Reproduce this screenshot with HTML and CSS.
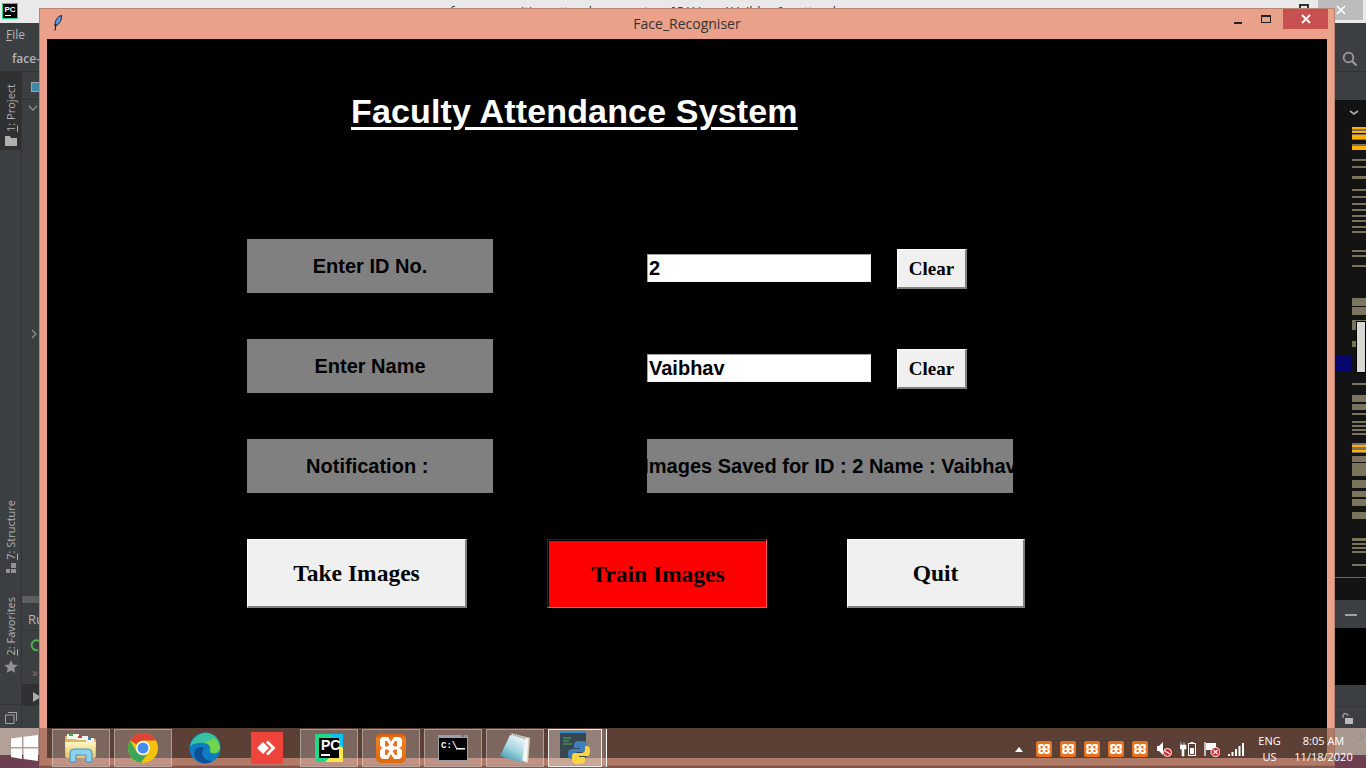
FILE: index.html
```html
<!DOCTYPE html>
<html lang="en">
<head>
<meta charset="utf-8">
<title>Face_Recogniser</title>
<link rel="stylesheet" href="styles.css">
</head>
<body>
<div class="desktop">
  <div class="ide">
    <div class="ide-title">
      <svg class="pc-logo" width="16" height="16" viewBox="0 0 16 16"><rect width="16" height="16" fill="#21d789"/><rect x="1" y="1" width="14" height="14" fill="#000"/><text x="2.500" y="9" class="pc-logo-text">PC</text><rect x="3" y="12" width="6" height="1" fill="#fff"/></svg>
      <span class="ide-caption">face-recognition-attendance-system [C:\Users\Vaibhav] – attendance.py</span>
      <span class="ide-restore"></span>
      <span class="ide-close"><svg width="10" height="10" viewBox="0 0 10 10"><path d="M1 1l8 8M9 1l-8 8" stroke="#fff" stroke-width="1.600"/></svg></span>
    </div>
    <div class="ide-menu"><span class="menu-item"><u>F</u>ile</span></div>
    <div class="ide-nav">
      <span class="crumb">face-recognition</span>
      <svg class="search" width="16" height="16" viewBox="0 0 16 16"><circle cx="6.500" cy="6.500" r="4.800" fill="none" stroke="#9a9c9e" stroke-width="1.800"/><path d="M10 10l4.500 4.500" stroke="#9a9c9e" stroke-width="2"/></svg>
    </div>
    <div class="ide-body">
      <div class="tool-strip">
        <div class="tool active">
          <span class="vtext"><u>1</u>: Project</span>
          <svg width="12" height="10" viewBox="0 0 12 10"><path d="M0 0h5l1 2h6v8H0z" fill="#aeb0b2"/></svg>
        </div>
        <div class="tool structure">
          <span class="vtext"><u>7</u>: Structure</span>
          <svg width="10" height="10" viewBox="0 0 10 10"><path d="M0 6h4v4H0zM5 6h5v4H5zM5 0h5v5H5z" fill="#909294"/></svg>
        </div>
        <div class="tool favorites">
          <span class="vtext"><u>2</u>: Favorites</span>
          <svg width="14" height="13" viewBox="0 0 14 13"><path d="M7 0l2 4.400 4.800.5-3.600 3.200 1 4.700L7 10.400 2.800 12.800l1-4.700L.2 4.900 5 4.400z" fill="#909294"/></svg>
        </div>
        <div class="tool-foot">
          <svg width="12" height="12" viewBox="0 0 12 12"><path d="M3 .5h8.500V9M.5 3h8.500v8.500H.5z" fill="none" stroke="#a0a2a4"/></svg>
        </div>
      </div>
      <div class="side-panel">
        <div class="panel-head"><span class="panel-square"></span></div>
        <svg class="chev" width="10" height="6" viewBox="0 0 10 6"><path d="M1 1l4 4 4-4" fill="none" stroke="#8b8d8f" stroke-width="1.400"/></svg>
        <svg class="chev-right" width="6" height="10" viewBox="0 0 6 10"><path d="M1 1l4 4-4 4" fill="none" stroke="#8b8d8f" stroke-width="1.400"/></svg>
        <div class="panel-scroll"></div>
        <div class="run-head">Run</div>
        <svg class="run-icon" width="12" height="12" viewBox="0 0 12 12"><path d="M10 2.500A5 5 0 1 0 8 11" fill="none" stroke="#4caf50" stroke-width="2"/></svg>
        <div class="run-more">»</div>
        <div class="run-play"><svg width="8" height="10" viewBox="0 0 8 10"><path d="M0 0l8 5-8 5z" fill="#a9abad"/></svg></div>
      </div>
      <div class="editor"></div>
      <div class="gutter">
        <div class="gutter-head"></div>
        <svg class="map" width="31" height="500" viewBox="0 0 31 500">
          <path d="M15 11l4 3 4-3" fill="none" stroke="#a8aaac" stroke-width="1.600"/>
          <g fill="#7b745d">
            <rect x="17" y="27" width="14" height="6"/><rect x="17" y="34" width="14" height="6"/><rect x="17" y="44" width="14" height="6"/>
            <rect x="17" y="59" width="14" height="2"/><rect x="17" y="66" width="14" height="2"/><rect x="17" y="76" width="14" height="3"/>
            <rect x="17" y="89" width="14" height="2"/><rect x="17" y="96" width="14" height="2"/><rect x="17" y="103" width="14" height="2"/>
            <rect x="17" y="109" width="14" height="2"/><rect x="17" y="115" width="14" height="2"/><rect x="17" y="120" width="14" height="2"/>
            <rect x="17" y="126" width="14" height="2"/><rect x="17" y="131" width="14" height="2"/><rect x="17" y="150" width="14" height="2"/>
            <rect x="17" y="155" width="14" height="2"/><rect x="17" y="165" width="14" height="2"/><rect x="17" y="198" width="14" height="8"/>
            <rect x="17" y="207" width="14" height="8"/><rect x="17" y="220" width="14" height="10"/><rect x="17" y="241" width="14" height="6"/>
            <rect x="17" y="283" width="14" height="2"/><rect x="17" y="295" width="14" height="7"/><rect x="17" y="304" width="14" height="6"/>
            <rect x="17" y="313" width="14" height="2"/><rect x="17" y="321" width="14" height="2"/><rect x="17" y="325" width="14" height="2"/>
            <rect x="17" y="329" width="14" height="2"/><rect x="17" y="333" width="14" height="2"/><rect x="17" y="343" width="14" height="10"/>
            <rect x="17" y="356" width="14" height="6"/><rect x="17" y="363" width="14" height="13"/><rect x="17" y="380" width="14" height="8"/>
            <rect x="17" y="391" width="14" height="6"/><rect x="17" y="399" width="14" height="7"/><rect x="17" y="412" width="14" height="7"/>
            <rect x="17" y="438" width="14" height="3"/><rect x="17" y="443" width="14" height="2"/><rect x="17" y="447" width="14" height="2"/>
            <rect x="17" y="451" width="14" height="2"/><rect x="17" y="464" width="14" height="2"/>
          </g>
          <g fill="#ffb000">
            <rect x="17" y="27" width="14" height="2"/><rect x="17" y="31" width="14" height="2"/><rect x="17" y="35" width="14" height="4"/>
            <rect x="17" y="46" width="14" height="4"/><rect x="17" y="345" width="14" height="2"/><rect x="17" y="350" width="14" height="2"/>
          </g>
          <rect x="0" y="255" width="17" height="17" fill="#06066e"/>
          <rect x="21.500" y="221.500" width="9" height="51" fill="#d9d9d4" stroke="#000"/>
          <rect x="0" y="477" width="31" height="1" fill="#666"/>
        </svg>
        <div class="gutter-tool"><span class="dash"></span></div>
        <div class="gutter-gap"></div>
        <div class="gutter-rule"></div>
        <div class="gutter-foot">
          <svg width="11" height="12" viewBox="0 0 11 12"><path d="M1 5V3a2.500 2.500 0 0 1 5 0" fill="none" stroke="#9a9c9e" stroke-width="1.300"/><rect x="3" y="5" width="8" height="6" fill="#b7b9bb"/></svg>
        </div>
      </div>
    </div>
  </div>

  <div class="tkwin">
    <div class="tk-title">
      <svg class="feather" width="10" height="16" viewBox="0 0 10 16"><path d="M8.500.5C4.500 1.500 2 5 1.800 10.500L3.500 10.500C6.500 9 9 5 8.500.5z" fill="#5b93e6" stroke="#15181e" stroke-width=".9"/><path d="M3 9L2 15.500" stroke="#15181e" stroke-width="1.100"/></svg>
      <span class="tk-caption">Face_Recogniser</span>
      <div class="tk-controls">
        <span class="tk-min"></span>
        <span class="tk-max"></span>
        <span class="tk-close"><svg width="10" height="10" viewBox="0 0 10 10"><path d="M1 1l8 8M9 1l-8 8" stroke="#fff" stroke-width="1.800"/></svg></span>
      </div>
    </div>
    <div class="tk-canvas">
      <h1 class="app-title">Faculty Attendance System</h1>
      <div class="form-row row-id">
        <div class="field-label">Enter ID No.</div>
        <div class="entry">2</div>
        <div class="btn btn-clear">Clear</div>
      </div>
      <div class="form-row">
        <div class="field-label">Enter Name</div>
        <div class="entry">Vaibhav</div>
        <div class="btn btn-clear">Clear</div>
      </div>
      <div class="form-row">
        <div class="field-label field-note">Notification : </div>
        <div class="message"><span>Images Saved for ID : 2 Name : Vaibhav</span></div>
      </div>
      <div class="action-row">
        <div class="btn btn-big btn-take">Take Images</div>
        <div class="btn btn-big btn-train">Train Images</div>
        <div class="btn btn-big btn-quit">Quit</div>
      </div>
    </div>
  </div>

  <div class="taskbar">
    <div class="start">
      <svg width="27" height="26" viewBox="0 0 27 26"><path d="M0 3.500L11 2v10H0zM12.500 1.800L27 0v12H12.500zM0 13.500h11v10.500L0 22zM12.500 13.500H27V26L12.500 24z" fill="#fff"/></svg>
    </div>
    <div class="task-apps">
      <div class="task on"><svg width="34" height="30" viewBox="0 0 34 30"><defs><linearGradient id="fold" x1="0" y1="0" x2="0" y2="1"><stop offset="0" stop-color="#fff6c4"/><stop offset="1" stop-color="#e6c562"/></linearGradient></defs><path d="M1 3h11l2 3h18v18H1z" fill="#d9b95c"/><rect x="3" y="1" width="12" height="5" fill="#f4f4ee"/><rect x="5" y="1" width="4" height="2" fill="#35b34a"/><rect x="12" y="3" width="12" height="4" fill="#f4f4ee"/><rect x="14" y="3" width="4" height="2" fill="#d6403a"/><rect x="22" y="5" width="8" height="4" fill="#f4f4ee"/><rect x="24" y="5" width="3" height="2" fill="#2b90d9"/><path d="M1 9h31l-1 16H2z" fill="url(#fold)"/><path d="M6 29v-9q0-4 4-4h14q4 0 4 4v9h-6v-7h-10v7z" fill="#8fd0ec" stroke="#3f93c4"/></svg></div>
      <div class="task on"><svg width="30" height="30" viewBox="0 0 30 30"><circle cx="15" cy="15" r="15" fill="#f4c20d"/><path d="M2 7.500A15 15 0 0 1 28 7.500H15A7.500 7.500 0 0 0 8.500 11.200z" fill="#db4437"/><path d="M2 7.500A15 15 0 0 0 12.800 29.800L19.500 21A7.500 7.500 0 0 1 8.500 18.700z" fill="#3aa757"/><circle cx="15" cy="15" r="7" fill="#fff"/><circle cx="15" cy="15" r="5.500" fill="#4a8bf0"/></svg></div>
      <div class="task"><svg width="32" height="32" viewBox="0 0 32 32"><circle cx="16" cy="16" r="15.500" fill="#0f7cc4"/><path d="M1 15C3 5 12 0 19 1c7 1 12 7 12 14 0 5-6 7-10 5 2-4 0-9-6-9-6 0-12 0-14 4z" fill="#36c2a0"/><path d="M25 6c5 4 6 9 6 10 0 5-6 7-10 4 1-5-1-9-6-9z" fill="#6fd44e"/><path d="M13 20c0 5 4 9 10 9-3 2-6 3-10 2-6-2-9-7-7-13 2-3 7-4 9-2z" fill="#0c4f96"/></svg></div>
      <div class="task"><svg width="32" height="32" viewBox="0 0 32 32"><rect width="32" height="32" fill="#ef443b"/><path d="M6 16l6-6 6 6-6 6z" fill="#fff"/><path d="M17 8.500l7.500 7.500-7.500 7.500-2-2 5.500-5.500-5.500-5.500z" fill="#fff"/></svg></div>
      <div class="task on"><svg width="28" height="28" viewBox="0 0 28 28"><rect width="28" height="28" fill="#21d789"/><path d="M10 28L28 10v18z" fill="#fce84d"/><path d="M14 0h14v14z" fill="#07c3f2"/><rect x="4" y="4" width="20" height="20" fill="#000"/><text x="6" y="16" class="pc-big">PC</text><rect x="6" y="20" width="9" height="2" fill="#fff"/></svg></div>
      <div class="task on"><svg width="32" height="32" viewBox="0 0 32 32"><defs><linearGradient id="xam" x1="0" y1="0" x2="0" y2="1"><stop offset="0" stop-color="#c4560f"/><stop offset=".2" stop-color="#f07d1e"/><stop offset="1" stop-color="#de6a12"/></linearGradient></defs><rect x="1" y="1" width="30" height="30" rx="5" fill="url(#xam)"/><path d="M9 5h4l3 5 3-5h4a4 4 0 0 1 4 4v4a4 4 0 0 1-3 3 4 4 0 0 1 3 3v4a4 4 0 0 1-4 4h-4l-3-5-3 5H9a4 4 0 0 1-4-4v-4a4 4 0 0 1 3-3 4 4 0 0 1-3-3V9a4 4 0 0 1 4-4z" fill="#fff"/><path d="M10 9h2l2.500 4-2 1.500H10zM20 9h2v5.500h-2.500l-2-1.500zM10 17.500h2.500l2 1.500-2.500 4h-2zM19.500 17.500H22V23h-2l-2.500-4z" fill="#e8731c"/></svg></div>
      <div class="task on"><svg width="30" height="26" viewBox="0 0 30 26"><rect width="30" height="26" fill="#9ca0a6"/><rect x="1" y="3" width="28" height="22" fill="#000"/><path d="M23 1h1M25 1h1M27 1h1" stroke="#333"/><text x="3" y="13" class="cmd-text">C:\</text><rect x="18" y="13" width="9" height="1.500" fill="#fff"/></svg></div>
      <div class="task on"><svg width="30" height="30" viewBox="0 0 30 30"><defs><linearGradient id="pad" x1=".7" y1="0" x2=".2" y2="1"><stop offset="0" stop-color="#eef8fa"/><stop offset=".5" stop-color="#9fd3de"/><stop offset="1" stop-color="#2f8ea5"/></linearGradient></defs><path d="M11 0l19 5-2 25-9-3z" fill="#d9d2b8"/><path d="M11 1l17 5-1 23-8-3z" fill="#f5f5f5"/><path d="M10 2l15 5-3 23L0 23z" fill="url(#pad)"/><path d="M11 1l15 5" stroke="#8a9599" stroke-width="2" stroke-dasharray="1 1"/></svg></div>
      <div class="task on active"><svg width="30" height="34" viewBox="0 0 30 34"><rect x="0" y="0" width="26" height="27" fill="#37474f"/><rect x="0" y="0" width="26" height="2" fill="#2d8bd8"/><path d="M3 7h8M3 10h6M3 13h9" stroke="#4caf50" stroke-width="1.200"/><path d="M19 10c-4 0-5 2-5 4v3h6v1h-8c-3 0-4 2-4 5s1 5 4 5h2v-4c0-2 2-3 4-3h6c2 0 3-1 3-3v-4c0-2-2-4-4-4z" fill="#3f80b8"/><path d="M20 33c4 0 5-2 5-4v-3h-6v-1h8c2 0 3-2 3-5s-1-5-3-5h-2v4c0 2-2 3-4 3h-6c-2 0-3 1-3 3v4c0 2 2 4 4 4z" fill="#ffd343"/></svg></div>
      <div class="task-edge"></div>
    </div>
    <div class="tray">
      <svg class="tray-up" width="8" height="5" viewBox="0 0 8 5"><path d="M0 5l4-5 4 5z" fill="#fff"/></svg>
      <div class="tray-icons">
        <svg width="16" height="16" viewBox="0 0 16 16"><use href="#xp"/></svg>
        <svg width="16" height="16" viewBox="0 0 16 16"><use href="#xp"/></svg>
        <svg width="16" height="16" viewBox="0 0 16 16"><use href="#xp"/></svg>
        <svg width="16" height="16" viewBox="0 0 16 16"><use href="#xp"/></svg>
        <svg width="16" height="16" viewBox="0 0 16 16"><use href="#xp"/></svg>
        <svg width="16" height="16" viewBox="0 0 16 16"><path d="M1 5h2l4-4v13l-4-4H1z" fill="#fff"/><circle cx="11.500" cy="11.500" r="4" fill="#d8232a" stroke="#fff"/><path d="M9 10l5 3" stroke="#fff" stroke-width="1.300"/></svg>
        <svg width="16" height="16" viewBox="0 0 16 16"><path d="M1 1v3M4 1v3M0 4h6v4H4v7H2V8H0z" fill="#fff" stroke="#fff" stroke-width=".6"/><rect x="8.500" y="2.500" width="7" height="12" fill="none" stroke="#fff"/><rect x="10" y="7" width="4" height="6" fill="#fff"/><rect x="10.500" y="1" width="3" height="1.500" fill="#fff"/></svg>
        <svg width="16" height="16" viewBox="0 0 16 16"><path d="M1 1v14" stroke="#fff" stroke-width="1.300"/><path d="M2 2h10v7H2z" fill="#fff"/><circle cx="11.500" cy="11" r="4.500" fill="#d8232a" stroke="#fff"/><path d="M9.500 9l4 4M13.500 9l-4 4" stroke="#fff" stroke-width="1.200"/></svg>
        <svg width="16" height="16" viewBox="0 0 16 16"><path d="M0 13h2v2H0zM3.500 11h2v4h-2zM7 8h2v7H7zM10.500 5h2v10h-2zM14 2h2v13h-2z" fill="#fff"/></svg>
      </div>
      <div class="tray-lang"><span>ENG</span><span>US</span></div>
      <div class="tray-clock"><span>8:05 AM</span><span>11/18/2020</span></div>
      <svg class="tray-more" width="6" height="10" viewBox="0 0 6 10"><path d="M1 1l4 4-4 4" fill="none" stroke="#8f8f8f" stroke-width="1.500"/></svg>
    </div>
  </div>
  <svg class="defs" width="0" height="0"><defs><g id="xp"><rect width="16" height="16" rx="2" fill="#e8731c"/><path d="M4 3h3l1 2 1-2h3a2 2 0 0 1 2 2v1a2 2 0 0 1-2 2 2 2 0 0 1 2 2v1a2 2 0 0 1-2 2H9l-1-2-1 2H4a2 2 0 0 1-2-2v-1a2 2 0 0 1 2-2 2 2 0 0 1-2-2V5a2 2 0 0 1 2-2z" fill="#fff"/><path d="M4.500 5h2l.5 2-1 .5H4.500zM9.500 5h2v2.500h-1.500l-1-.5zM4.500 9h1.500l1 .5-.5 1.500h-2zM10 9h1.500v2h-2l-.5-1.500z" fill="#e8731c"/></g></defs></svg>
</div>
</body>
</html>
```

FILE: styles.css
```css
* { box-sizing: border-box; }
html, body { margin: 0; padding: 0; background: #6b3c4c; }
.desktop { position: relative; width: 1366px; height: 768px; overflow: hidden; }
.defs { position: absolute; }

/* IDE behind */
.ide { position: absolute; left: 0; top: 0; width: 1366px; height: 760px; display: flex; flex-direction: column; background: #3c3f41; font-family: "Open Sans", "Noto Sans", sans-serif; font-size: 12px; color: #b4b6b8; }
.ide-title { height: 23px; background: #e9e9e9; display: flex; align-items: flex-start; padding: 3px 3px 0 2px; position: relative; }
.pc-logo-text { font: bold 8px "Liberation Sans", sans-serif; fill: #fff; }
.ide-caption { margin-left: 432px; font-size: 13px; line-height: 16px; height: 9px; overflow: hidden; color: #333; white-space: nowrap; }
.ide-restore { width: 10px; height: 8px; margin-left: auto; margin-top: 1px; margin-right: 9px; border: 2px solid #333; border-bottom: 0; }
.ide-close { width: 45px; height: 20px; margin-top: -3px; background: #bcbcbc; display: flex; align-items: center; justify-content: center; }
.ide-menu { height: 23px; padding: 3px 6px; }
.menu-item { color: #b4b6b8; }
.ide-nav { height: 26px; border-bottom: 1px solid #323232; display: flex; align-items: center; justify-content: space-between; padding: 0 8px 0 12px; font-weight: 600; }
.ide-body { flex: 1; display: flex; min-height: 0; }
.tool-strip { width: 22px; border-right: 1px solid #323436; display: flex; flex-direction: column; align-items: center; }
.tool { display: flex; flex-direction: column; align-items: center; gap: 4px; width: 100%; }
.tool.active { background: #2f3133; height: 78px; padding-top: 12px; }
.vtext { writing-mode: vertical-rl; transform: rotate(180deg); font-family: "Open Sans", sans-serif; font-size: 11px; color: #b0b2b4; line-height: 14px; }
.tool.structure { margin-top: auto; }
.tool.favorites { margin-top: 24px; }
.tool-foot { margin-top: 31px; width: 100%; border-top: 1px solid #323436; padding: 6px 0 0 5px; height: 56px; flex: none; }
.side-panel { width: 17px; display: flex; flex-direction: column; overflow: hidden; }
.panel-head { height: 28px; border-bottom: 1px solid #323436; padding: 10px 0 0 9px; }
.panel-square { display: block; width: 12px; height: 10px; background: #3f88a8; border: 1px solid #a0a2a4; }
.chev { margin: 5px 0 0 6px; }
.chev-right { margin: 218px 0 0 9px; }
.panel-scroll { margin-top: 257px; height: 7px; background: #5c5e60; }
.run-head { margin-top: 7px; height: 21px; padding-left: 6px; border-bottom: 1px solid #323436; white-space: nowrap; color: #b4b6b8; font-size: 13px; }
.run-icon { margin: 8px 0 0 8px; }
.run-more { margin: 16px 0 0 10px; line-height: 12px; color: #777; }
.run-play { margin-top: 5px; height: 22px; background: #2f3133; padding: 5px 0 0 11px; }
.editor { flex: 1; background: #2b2b2b; }
.gutter { width: 31px; background: #131313; display: flex; flex-direction: column; }
.gutter-head { height: 28px; flex: none; background: #3c3f41; }
.map { display: block; flex: none; }
.gutter-tool { height: 28px; flex: none; background: #3c3f41; display: flex; align-items: center; justify-content: center; }
.dash { width: 12px; height: 2px; background: #a0a2a4; margin-top: 1px; }
.gutter-gap { height: 57px; flex: none; background: #000; }
.gutter-rule { height: 22px; flex: none; background: #3c3f41; border-bottom: 1px solid #323436; }
.gutter-foot { flex: 1; background: #3c3f41; padding: 5px 0 0 7px; }

/* Tk window */
.tkwin { position: absolute; left: 39px; top: 8px; width: 1296px; height: 758px; background: #e9a189; border: 1px solid #b98472; padding: 0 7px 7px; display: flex; flex-direction: column; }
.tk-title { height: 30px; flex: none; display: flex; align-items: flex-start; position: relative; justify-content: center; }
.feather { position: absolute; left: 6px; top: 6px; }
.tk-caption { font-family: "Open Sans", "Noto Sans", sans-serif; font-size: 14px; color: #333; margin-top: 5px; }
.tk-controls { position: absolute; right: -1px; top: 0; display: flex; align-items: flex-start; }
.tk-min { width: 8px; height: 2px; background: #222; margin: 13px 19px 0 0; }
.tk-max { width: 10px; height: 8px; background: transparent; border: 1px solid #222; border-top-width: 2px; margin: 6px 12px 0 0; }
.tk-close { width: 45px; height: 20px; background: #c75050; display: flex; align-items: center; justify-content: center; }
.tk-canvas { flex: 1; background: #000; padding-left: 200px; display: flex; flex-direction: column; }
.app-title { margin: 50px 0 0 104px; width: max-content; font: bold 34px/44px "Liberation Sans", Arial, sans-serif; letter-spacing: .16px; color: #fff; text-decoration: underline; text-decoration-thickness: 3px; text-underline-offset: 4px; }
.form-row { display: flex; align-items: flex-start; height: 54px; margin-top: 46px; }
.row-id { margin-top: 106px; }
.field-label { width: 246px; height: 54px; flex: none; background: #808080; display: flex; align-items: center; justify-content: center; white-space: pre; font: bold 20px "Liberation Sans", Arial, sans-serif; color: #000; }
.entry { width: 224px; height: 28px; margin: 15px 0 0 154px; flex: none; background: #fff; border: 1px solid #f0f0f0; border-top-color: #a0a0a0; border-left-color: #a0a0a0; padding-left: 1px; font: bold 20px/26px "Liberation Sans", Arial, sans-serif; color: #000; }
.btn { display: flex; align-items: center; justify-content: center; flex: none; background: #f0f0f0; border: 2px solid #808080; border-top: 1px solid #fff; border-left: 1px solid #fff; font-family: "Liberation Serif", "Times New Roman", serif; font-weight: bold; color: #000; }
.btn-clear { width: 70px; height: 40px; margin: 10px 0 0 26px; font-size: 19px; }
.message { width: 366px; height: 54px; margin-left: 154px; background: #808080; display: flex; align-items: center; justify-content: center; overflow: hidden; white-space: nowrap; font: bold 20px "Liberation Sans", Arial, sans-serif; color: #000; }
.message span { flex: none; }
.action-row { display: flex; margin-top: 46px; }
.btn-big { height: 69px; font-size: 23.5px; }
.btn-take { width: 220px; }
.btn-train { width: 220px; margin-left: 80px; padding: 2px 0 0 2px; background: #f00; border: 1px solid #ff5555; border-top-color: #7a0000; border-left-color: #7a0000; box-shadow: inset 1px 1px 0 #000; }
.btn-quit { width: 178px; margin-left: 80px; }

/* Taskbar */
.taskbar { position: absolute; left: 0; right: 0; bottom: 0; height: 40px; background: linear-gradient(#b3a198 27px, #6d3f50 27px) left / 39px 100% no-repeat, linear-gradient(#a9988f 27px, #6d3f50 27px) right / 31px 100% no-repeat, rgba(144, 100, 83, .64); display: flex; align-items: stretch; font-family: "Open Sans", "Noto Sans", sans-serif; font-size: 11px; color: #fff; }
.start { width: 52px; padding: 7px 0 0 11px; flex: none; }
.task-apps { display: flex; gap: 4px; }
.task { width: 58px; height: 38px; margin-top: 1px; display: flex; align-items: center; justify-content: center; border: 1px solid transparent; }
.task.on { background: rgba(255, 255, 255, .2); border-color: rgba(255, 255, 255, .35); }
.task.active { width: 54px; background: rgba(255, 255, 255, .34); border-color: rgba(255, 255, 255, .85); overflow: hidden; }
.task-edge { width: 5px; height: 38px; margin: 1px 0 0 -4px; background: rgba(255, 255, 255, .2); border-right: 1px solid #fff; }
.tray { margin-left: auto; display: flex; align-items: flex-start; }
.tray-up { margin: 19px 13px 0 0; }
.tray-icons { display: flex; gap: 8px; margin-top: 13px; }
.tray-lang, .tray-clock { display: flex; flex-direction: column; align-items: center; line-height: 16px; margin-top: 5px; }
.tray-lang { margin-left: 14px; width: 23px; }
.tray-clock { margin-left: 14px; width: 57px; }
.tray-more { margin: 4px 2px 0 6px; }
.pc-big { font: bold 14px "Liberation Sans", sans-serif; fill: #fff; }
.cmd-text { font: bold 9px "Liberation Mono", monospace; fill: #fff; }
```
